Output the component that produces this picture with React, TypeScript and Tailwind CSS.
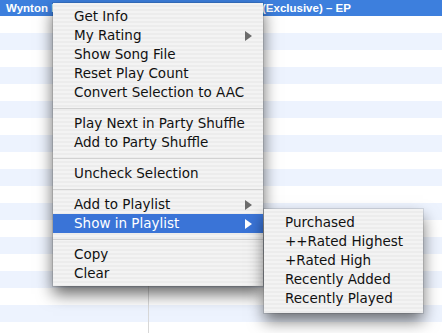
import React from "react";

const Arrow = ({ white }: { white?: boolean }) => (
  <svg width="7" height="10" viewBox="0 0 7 10" className="block">
    <path d="M0 0 L7 5 L0 10 Z" fill={white ? "#ffffff" : "#6b6b6b"} />
  </svg>
);

type Item = { label: string; arrow?: boolean; active?: boolean } | "sep";

const items: Item[] = [
  { label: "Get Info" },
  { label: "My Rating", arrow: true },
  { label: "Show Song File" },
  { label: "Reset Play Count" },
  { label: "Convert Selection to AAC" },
  "sep",
  { label: "Play Next in Party Shuffle" },
  { label: "Add to Party Shuffle" },
  "sep",
  { label: "Uncheck Selection" },
  "sep",
  { label: "Add to Playlist", arrow: true },
  { label: "Show in Playlist", arrow: true, active: true },
  "sep",
  { label: "Copy" },
  { label: "Clear" },
];

const sub = ["Purchased", "++Rated Highest", "+Rated High", "Recently Added", "Recently Played"];

const menuBg =
  "bg-[repeating-linear-gradient(180deg,#f3f3f3_0px,#f3f3f3_2px,#ececec_2px,#ececec_4px)]";

export default function App() {
  const rows = Array.from({ length: 19 });
  return (
    <div
      className="relative w-[442px] h-[333px] overflow-hidden bg-white"
      style={{ fontFamily: '"DejaVu Sans", sans-serif' }}
    >
      {/* selected top row */}
      <div
        className="h-[16px] bg-[#3d7fdd] text-white font-bold text-[11.5px] leading-[16px] flex whitespace-nowrap"
        style={{ fontFamily: '"Liberation Sans", Arial, sans-serif' }}
      >
        <span className="w-[262px] pl-[6px]">Wynton M</span>
        <span>(Exclusive) – EP</span>
      </div>
      {/* striped rows */}
      <div className="relative">
        {rows.map((_, i) => (
          <div key={i} className={i % 2 === 1 ? "h-[17px] bg-[#edf3fe]" : "h-[17px] bg-white"} />
        ))}
        <div className="absolute left-[148px] top-0 bottom-0 w-px bg-[#d8d8d8]" />
      </div>

      {/* main context menu */}
      <div
        className={`absolute left-[53px] top-[3px] w-[210px] pt-[4px] pb-[3px] ${menuBg} shadow-[0_8px_15px_rgba(0,0,0,0.6),0_0_0_1px_rgba(0,0,0,0.1)] text-[13.5px] text-[#111]`}
      >
        {items.map((it, i) =>
          it === "sep" ? (
            <div key={i} className="h-[12px] flex items-center">
              <div className="w-full h-px bg-[#d2d2d2]" />
            </div>
          ) : (
            <div
              key={i}
              className={`h-[19px] leading-[19px] pl-[21px] pr-[11px] flex items-center justify-between ${
                it.active ? "bg-[#3a74d7] text-white" : ""
              }`}
            >
              <span>{it.label}</span>
              {it.arrow && <Arrow white={it.active} />}
            </div>
          )
        )}
      </div>

      {/* submenu */}
      <div
        className={`absolute left-[264px] top-[209px] w-[159px] pt-[4px] pb-[5px] ${menuBg} shadow-[0_8px_15px_rgba(0,0,0,0.55),0_0_0_1px_rgba(0,0,0,0.1)] text-[13.5px] text-[#111]`}
      >
        {sub.map((s) => (
          <div key={s} className="h-[19px] leading-[19px] pl-[21px]">
            {s}
          </div>
        ))}
      </div>
    </div>
  );
}
